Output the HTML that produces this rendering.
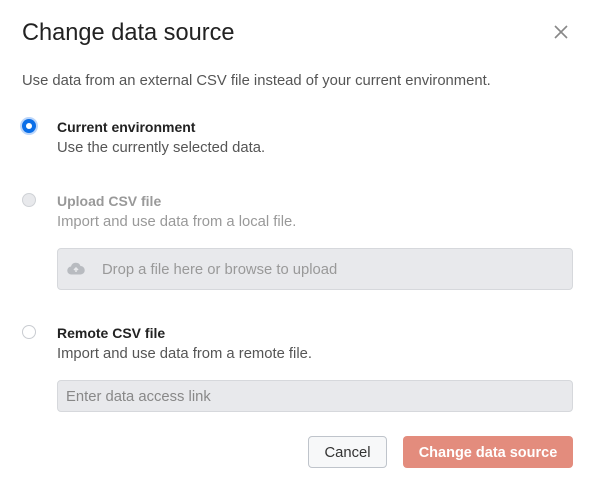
<!DOCTYPE html><html><head><style>
body{margin:0;width:597px;height:492px;background:#fff;font-family:"Liberation Sans",sans-serif;position:relative;overflow:hidden}
.a{position:absolute;white-space:nowrap}
.r{position:absolute;width:14px;height:14px;border-radius:50%;box-sizing:border-box}
.in{position:absolute;box-sizing:border-box;background:#e8e9ec;border:1px solid #d6d8dc;border-radius:4px}
.l{font-size:14px;font-weight:bold}
.d{font-size:14.8px}
</style></head><body>
<div class="a" style="left:22px;top:20px;font-size:23.6px;color:#222">Change data source</div>
<svg class="a" style="left:553px;top:24px" width="16" height="16"><path d="M2 2L14 14M14 2L2 14" stroke="#888" stroke-width="1.6"/></svg>
<div class="a d" style="left:22px;top:73px;color:#555">Use data from an external CSV file instead of your current environment.</div>

<div class="r" style="left:22px;top:119px;background:#0a6ee8;box-shadow:0 0 0 2px #bcd6fa"><div style="position:absolute;left:4px;top:4px;width:6px;height:6px;border-radius:50%;background:#fff"></div></div>
<div class="a l" style="left:57px;top:119px;color:#222">Current environment</div>
<div class="a d" style="left:57px;top:140px;color:#555">Use the currently selected data.</div>

<div class="r" style="left:22px;top:193px;background:#e8e9ec;border:1px solid #cfd2d6"></div>
<div class="a l" style="left:57px;top:193px;color:#999">Upload CSV file</div>
<div class="a d" style="left:57px;top:214px;color:#999">Import and use data from a local file.</div>
<div class="in" style="left:57px;top:248px;width:516px;height:42px"></div>
<svg class="a" style="left:67px;top:262px" width="18" height="13"><path d="M4.5 12.5a4 4 0 0 1-.5-8A5 5 0 0 1 13.5 4a4 4 0 0 1 0 8.5z" fill="#b8bbc0"/><path d="M9 10V6M7 8l2-2 2 2" stroke="#e8e9ec" stroke-width="1.5" fill="none"/></svg>
<div class="a d" style="left:102px;top:262px;color:#999">Drop a file here or browse to upload</div>

<div class="r" style="left:22px;top:325px;background:#fff;border:1px solid #c9ccd1"></div>
<div class="a l" style="left:57px;top:325px;color:#222">Remote CSV file</div>
<div class="a d" style="left:57px;top:346px;color:#555">Import and use data from a remote file.</div>
<div class="in" style="left:57px;top:380px;width:516px;height:32px"></div>
<div class="a d" style="left:66px;top:389px;color:#888">Enter data access link</div>

<div class="a" style="left:308px;top:436px;width:79px;height:32px;box-sizing:border-box;border:1px solid #bfc4cb;border-radius:4px;background:#f7f8f9;font-size:14.8px;color:#333;text-align:center;line-height:33px">Cancel</div>
<div class="a" style="left:403px;top:436px;width:170px;height:32px;border-radius:4px;background:#e38c7d;font-size:14.5px;font-weight:bold;color:#fff;text-align:center;line-height:34px">Change data source</div>
</body></html>
